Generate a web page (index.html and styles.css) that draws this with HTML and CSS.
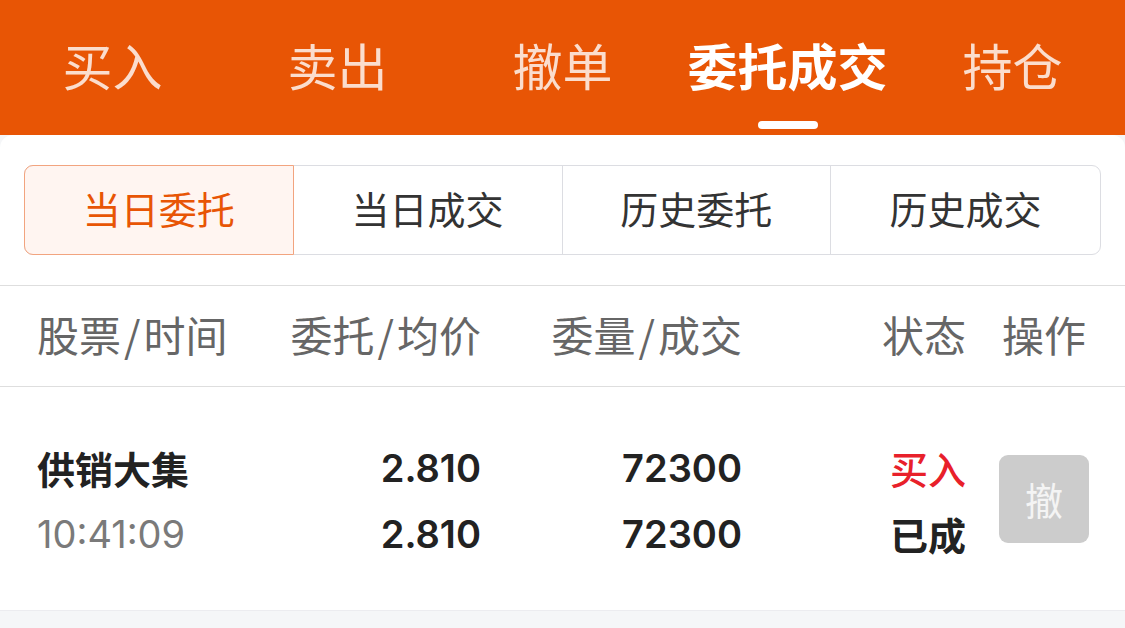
FILE: index.html
```html
<!DOCTYPE html>
<html lang="zh-CN">
<head>
    <meta charset="UTF-8">
    <meta name="viewport" content="width=device-width, initial-scale=1.0">
    <title>委托成交</title>
    <link rel="stylesheet" href="styles.css">
</head>
<body>

    <div class="topbar">
        <div class="tabs">
            <div class="tab">买入</div>
            <div class="tab">卖出</div>
            <div class="tab">撤单</div>
            <div class="tab active">委托成交</div>
            <div class="tab">持仓</div>
        </div>
    </div>

    <div class="card">
        <div class="segments">
            <div class="segment active">当日委托</div>
            <div class="segment">当日成交</div>
            <div class="segment">历史委托</div>
            <div class="segment">历史成交</div>
        </div>

        <div class="table">
            <div class="thead">
                <div class="col left">股票<span class="slash">/</span>时间</div>
                <div class="col">委托<span class="slash">/</span>均价</div>
                <div class="col">委量<span class="slash">/</span>成交</div>
                <div class="col">状态</div>
                <div class="col op">操作</div>
            </div>

            <div class="trow">
                <div class="col left">
                    <div class="name">供销大集</div>
                    <div class="time">10:41:09</div>
                </div>
                <div class="col num">
                    <div>2.810</div>
                    <div>2.810</div>
                </div>
                <div class="col num">
                    <div>72300</div>
                    <div>72300</div>
                </div>
                <div class="col">
                    <div class="buy">买入</div>
                    <div class="status">已成</div>
                </div>
                <div class="col op">
                    <button class="cancel" disabled>撤</button>
                </div>
            </div>
        </div>
    </div>

</body>
</html>
```

FILE: styles.css
```css
* {
    margin: 0;
    padding: 0;
    box-sizing: border-box;
}

body {
    font-family: 'Noto Sans CJK SC', 'Noto Sans', sans-serif;
    background-color: #f5f6f8;
    width: 1125px;
    height: 628px;
    overflow: hidden;
}

/* top orange tab bar */
.topbar {
    height: 135px;
    background-color: #e85505;
}

.tabs {
    display: grid;
    grid-template-columns: repeat(5, 1fr);
    padding-top: 32px;
}

.tab {
    position: relative;
    text-align: center;
    font-size: 50px;
    line-height: 64px;
    color: rgba(255, 255, 255, 0.8);
}

.tab.active {
    color: #fff;
    font-weight: bold;
}

.tab.active::after {
    content: '';
    position: absolute;
    left: 50%;
    top: 89px;
    width: 60px;
    height: 8px;
    margin-left: -30px;
    border-radius: 4px;
    background-color: #fff;
}

/* white card */
.card {
    background-color: #fff;
    border-radius: 13px 13px 0 0;
    padding-top: 30px;
}

.segments {
    display: grid;
    grid-template-columns: repeat(4, 1fr);
    height: 90px;
    margin: 0 24px 30px;
    border: 1px solid #dcdde2;
    border-radius: 9px;
}

.segment {
    display: flex;
    justify-content: center;
    align-items: center;
    padding-bottom: 5px;
    font-size: 38px;
    color: #333;
    border-right: 1px solid #dcdde2;
}

.segment:last-child {
    border-right: none;
}

.segment.active {
    color: #e85505;
    background-color: #fff5f1;
    border: 1px solid #f2a47f;
    border-radius: 9px 0 0 9px;
    margin: -1px 0 -1px -1px;
}

/* table */
.thead,
.trow {
    display: grid;
    grid-template-columns: 213px 231px 261px 224px 1fr;
    padding: 0 36px 0 37px;
}

.thead {
    height: 102px;
    align-items: center;
    padding-bottom: 6px;
    border-top: 1px solid #dedede;
    border-bottom: 1px solid #dedede;
    font-size: 42px;
    color: #666;
}

.slash {
    margin: 0 3px;
}

.col {
    text-align: right;
}

.col.left {
    text-align: left;
}

.thead .col.op {
    padding-right: 3px;
}

.trow {
    height: 224px;
    align-items: center;
    border-bottom: 1px solid #ececf0;
    font-size: 38px;
    line-height: 66px;
    color: #222;
}

.trow .col {
    padding-top: 4px;
}

.name {
    font-weight: bold;
}

.time {
    font-family: 'Inter', 'Liberation Sans', sans-serif;
    color: #7a7a7a;
}

.num {
    font-family: 'Inter', 'Liberation Sans', sans-serif;
    font-weight: 600;
}

.buy {
    color: #e8202a;
    font-weight: 500;
}

.status {
    font-weight: bold;
}

.trow .col.op {
    display: flex;
    justify-content: flex-end;
    padding-top: 0;
}

.cancel {
    width: 90px;
    height: 88px;
    border: none;
    border-radius: 9px;
    background-color: #cccccc;
    color: #f4f4f4;
    font-family: 'Noto Sans CJK SC', sans-serif;
    font-size: 38px;
}
```
